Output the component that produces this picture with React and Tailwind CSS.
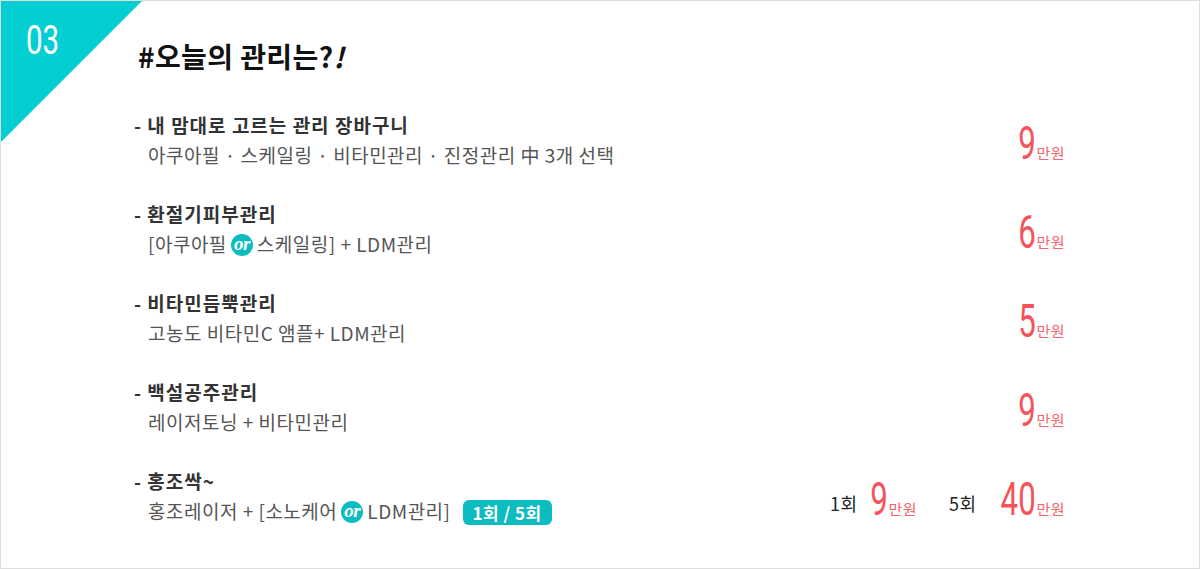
import React from "react";

const KR = "font-['Noto_Sans_CJK_KR','Noto_Sans',sans-serif]";

function Or() {
  return (
    <span className="inline-flex items-center justify-center w-[22px] h-[22px] rounded-full bg-[#0cbcc0] mx-[4px] align-middle -mt-[3px]">
      <span className="font-['Liberation_Serif',serif] italic font-bold text-[19px] leading-none text-white -mt-[4px] tracking-[-0.5px]">or</span>
    </span>
  );
}

function Price({ n }) {
  return (
    <span className="inline-flex items-baseline text-[#f5535a]">
      <span className="font-['Roboto',sans-serif] text-[46px] leading-[46px] inline-block scale-x-[0.68] origin-right -ml-[10px]">
        {n}
      </span>
      <span className={`${KR} text-[15px] leading-none text-[#f4646b] ml-[1px] tracking-[0.5px]`}>만원</span>
    </span>
  );
}

function Item({ title, children, right }) {
  return (
    <div className="flex items-end justify-between h-[60px]">
      <div className="flex flex-col">
        <div className="h-[30px] leading-[30px] text-[19px] font-bold text-[#333] tracking-[1px]">- {title}</div>
        <div className="h-[30px] leading-[30px] text-[19px] text-[#555] pl-[14px] whitespace-nowrap tracking-[0.5px]">{children}</div>
      </div>
      <div className="mb-[4px]">{right}</div>
    </div>
  );
}

export default function App() {
  return (
    <div className={`relative w-[1200px] h-[569px] bg-white border border-[#dddddd] overflow-hidden ${KR}`}>
      <div className="absolute top-0 left-0 w-[141px] h-[141px] bg-[#03ced2] [clip-path:polygon(0_0,100%_0,0_100%)]" />
      <div className="absolute top-[14px] left-[25px] font-['Roboto',sans-serif] font-normal text-[41px] leading-[50px] text-white inline-block scale-x-[0.72] origin-left">
        03
      </div>
      <div className="pl-[133px] pr-[134px] pt-[40px]">
        <h2 className="ml-[4px] h-[30px] leading-[30px] text-[28px] font-bold text-[#111] tracking-[0.4px]">#오늘의 관리는?<i>!</i></h2>
        <div className="mt-[39px] flex flex-col gap-[29px]">
          <Item title="내 맘대로 고르는 관리 장바구니" right={<Price n="9" />}>
            아쿠아필 · 스케일링 · 비타민관리 · 진정관리 中 3개 선택
          </Item>
          <Item title="환절기피부관리" right={<Price n="6" />}>
            [아쿠아필<Or />스케일링] + LDM관리
          </Item>
          <Item title="비타민듬뿍관리" right={<Price n="5" />}>
            고농도 비타민C 앰플+ LDM관리
          </Item>
          <Item title="백설공주관리" right={<Price n="9" />}>
            레이저토닝 + 비타민관리
          </Item>
          <Item
            title="홍조싹~"
            right={
              <div className="flex items-end">
                <span className="text-[18px] text-[#222] mb-[5px] mr-[14px] tracking-[0.5px]">1회</span>
                <Price n="9" />
                <span className="text-[18px] text-[#222] mb-[5px] ml-[32px] mr-[17px] tracking-[0.5px]">5회</span>
                <Price n="40" />
              </div>
            }
          >
            홍조레이저 + [소노케어<Or />LDM관리]
            <span className="inline-flex items-center h-[25px] px-[10px] ml-[12px] rounded-[6px] bg-[#0cbcc0] text-white font-bold text-[17px] leading-none align-middle -mt-[3px] tracking-[0.5px]">
              1회 / 5회
            </span>
          </Item>
        </div>
      </div>
    </div>
  );
}
